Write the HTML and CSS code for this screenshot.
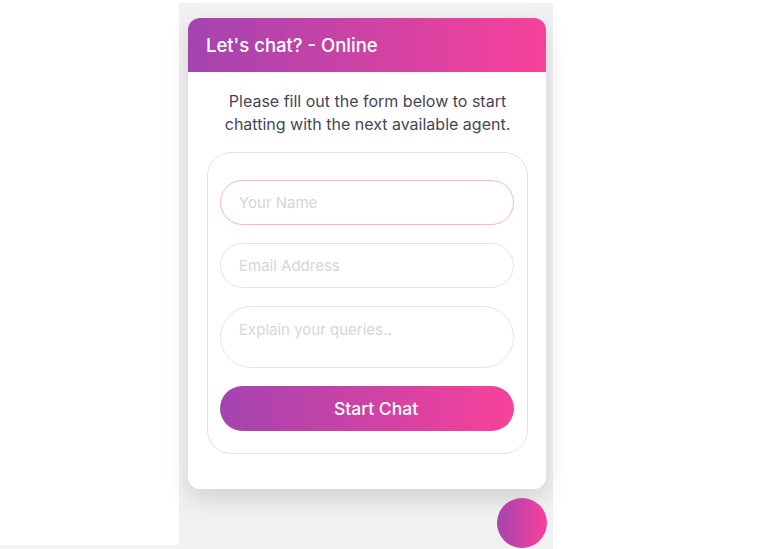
FILE: index.html
```html
<!DOCTYPE html>
<html lang="en">
<head>
  <meta charset="UTF-8">
  <meta name="viewport" content="width=device-width, initial-scale=1.0">
  <title>Let's chat</title>
  <link rel="stylesheet" href="styles.css">
</head>
<body>

  <div class="panel">
    <!-- Chat Form Card -->
    <div class="chat-card">
      <div class="chat-header">Let's chat? - Online</div>
      <div class="chat-body">
        <p class="intro">Please fill out the form below to start chatting with the next available agent.</p>

        <form class="chat-form">
          <input type="text" class="field field-active" placeholder="Your Name">
          <input type="email" class="field" placeholder="Email Address">
          <textarea class="field field-area" placeholder="Explain your queries.."></textarea>
          <button type="button" class="start-btn">Start Chat</button>
        </form>
      </div>
    </div>

    <!-- Launcher -->
    <div class="launcher-row">
      <div class="launcher"></div>
    </div>
  </div>

  <div class="bottom-strip"></div>

</body>
</html>
```

FILE: styles.css
```css
body {
  margin: 0;
  font-family: Inter, "Open Sans", sans-serif;
  background-color: #ffffff;
  height: 549px;
  overflow: hidden;
}

.panel {
  background-color: #f1f1f1;
  width: 374px;
  margin: 3px 0 0 179px;
  height: 546px;
  padding-top: 15px;
  box-sizing: border-box;
}

.chat-card {
  background-color: white;
  margin: 0 7px 0 9px;
  border-radius: 12px;
  overflow: hidden;
  box-shadow: 0 10px 24px rgba(0, 0, 0, 0.13);
}

.chat-header {
  background: linear-gradient(90deg, #a444b0, #f8419a);
  color: white;
  font-size: 18.5px;
  font-weight: 500;
  height: 54px;
  line-height: 54px;
  padding-left: 18px;
}

.chat-body {
  padding: 18px 18px 35px 19px;
}

.intro {
  margin: 0 0 16px;
  text-align: center;
  color: #464657;
  font-size: 16px;
  line-height: 23px;
  padding: 0 2px;
}

.chat-form {
  border: 1px solid #e2e2e2;
  border-radius: 24px;
  padding: 27px 13px 22px 12px;
  display: flex;
  flex-direction: column;
  gap: 18px;
}

.field {
  font-family: inherit;
  font-size: 15px;
  border: 1px solid #e4e4e4;
  border-radius: 23px;
  height: 45px;
  padding: 0 18px;
  box-sizing: border-box;
  outline: none;
  color: #444;
  background: white;
}

.field::placeholder {
  color: #d6d6d6;
}

.field-active {
  border-color: #ffb3d4;
}

.field-area {
  height: 62px;
  border-radius: 31px;
  padding-top: 13px;
  resize: none;
}

.start-btn {
  height: 45px;
  border: none;
  border-radius: 23px;
  padding-left: 24px;
  background: linear-gradient(90deg, #a444b0, #f8419a);
  color: white;
  font-family: inherit;
  font-size: 17.5px;
  font-weight: 500;
  cursor: pointer;
}

.launcher-row {
  display: flex;
  justify-content: flex-end;
  padding: 9px 6px 0 0;
}

.launcher {
  width: 50px;
  height: 50px;
  border-radius: 50%;
  background: linear-gradient(90deg, #a444b0, #f8419a);
}

.bottom-strip {
  position: absolute;
  left: 0;
  top: 545px;
  width: 375px;
  height: 4px;
  background-color: #f1f1f1;
}
```
